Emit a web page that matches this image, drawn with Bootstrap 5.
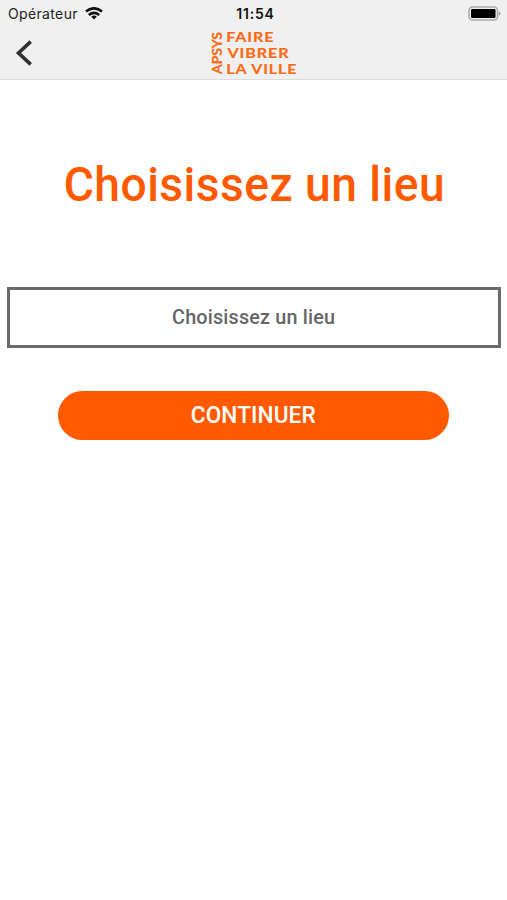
<!DOCTYPE html>
<html lang="fr">
<head>
<meta charset="utf-8">
<meta name="viewport" content="width=device-width, initial-scale=1">
<title>Choisissez un lieu</title>
<link href="https://cdn.jsdelivr.net/npm/bootstrap@5.3.0/dist/css/bootstrap.min.css" rel="stylesheet">
<style>
body { font-family: Roboto, sans-serif; min-height: 900px; overflow: hidden; }
.app-header { background: #f0f0f0; height: 80px; border-bottom: 1px solid #dcdcdc; }
.status-bar { height: 27px; padding: 0 6px 0 8px; font-family: Inter, sans-serif; font-size: 14px; line-height: 27px; color: #222; }
.carrier { letter-spacing: .35px; }
.wifi { margin-left: 7px; }
.clock { font-weight: 600; letter-spacing: .8px; color: #111; padding-left: 2px; }
.nav-row { height: 50px; padding: 1px 8px 0; }
.back-btn { width: 32px; height: 40px; }
/* Slightly condensed lettering */
.narrow { display: inline-block; transform: scaleX(.942); }
.page-title { color: #ff5a00; font-size: 49px; font-weight: 500; line-height: 60px; letter-spacing: .5px; margin: 75px 0 72px; padding-left: 2px; white-space: nowrap; }
.place-wrap { padding: 0 6px 0 7px; }
.place-select { height: 61px; border: 3px solid #6b6b6b; border-radius: 0; color: #666; font-size: 21px; font-weight: 500; letter-spacing: .2px; }
.continue-btn { width: 391px; height: 49px; margin-top: 43px; padding: 0 0 2px; background: #ff5a00; color: #fff; font-size: 24px; font-weight: 500; letter-spacing: .1px; }
.continue-btn:hover { background: #e85200; color: #fff; }
</style>
</head>
<body class="bg-white">
<header class="app-header">
  <div class="status-bar row g-0 align-items-center">
    <div class="col d-flex align-items-center">
      <span class="carrier">Opérateur</span>
      <svg class="wifi" width="18" height="13" viewBox="0 0 18 13" fill="none" stroke="#111" stroke-width="2.6" aria-hidden="true">
        <path d="M1 4.6Q9-2 17 4.6M3.8 7.9Q9 3.7 14.2 7.9"/>
        <path d="M9 12.4 6.2 9.7Q9 7.3 11.8 9.7Z" fill="#111" stroke="none"/>
      </svg>
    </div>
    <div class="col-auto clock">11:54</div>
    <div class="col d-flex justify-content-end">
      <svg width="33" height="15" viewBox="0 0 33 15" aria-hidden="true">
        <rect x="1" y="1" width="28.5" height="13" rx="3.5" fill="#f0f0f0" stroke="#aaa" stroke-width="1.5"/>
        <rect x="3" y="3" width="24.5" height="9" rx="1.2" fill="#000"/>
        <path d="M30.8 5.3Q32.5 6 32.5 7.5T30.8 9.7Z" fill="#999"/>
      </svg>
    </div>
  </div>
  <nav class="nav-row row g-0 align-items-center">
    <div class="col">
      <button class="back-btn btn p-0 border-0 d-flex align-items-center justify-content-center" aria-label="Retour">
        <svg width="18" height="28" viewBox="0 0 18 28" fill="none" stroke="#303030" stroke-width="3.6"><path d="M15.7 2.6 3.5 14 15.7 25.4"/></svg>
      </button>
    </div>
    <div class="col-auto">
      <svg class="d-block" width="90" height="48" viewBox="0 0 90 48" fill="#fa6a14" stroke="#fa6a14" stroke-width=".2" font-family="Lato, sans-serif" font-weight="700" role="img" aria-label="Apsys, faire vibrer la ville">
        <text transform="translate(13.3 45) rotate(-90)" font-size="13.2" textLength="42" lengthAdjust="spacingAndGlyphs">APSYS</text>
        <g font-size="14" letter-spacing=".8">
          <text x="17.3" y="13.4" textLength="48" lengthAdjust="spacingAndGlyphs">FAIRE</text>
          <text x="18.5" y="29.4" textLength="62" lengthAdjust="spacingAndGlyphs">VIBRER</text>
          <text x="17.3" y="45.4" textLength="71" lengthAdjust="spacingAndGlyphs">LA VILLE</text>
        </g>
      </svg>
    </div>
    <div class="col"></div>
  </nav>
</header>
<main class="d-flex flex-column align-items-center">
  <h1 class="page-title text-center"><span class="narrow">Choisissez un lieu</span></h1>
  <div class="place-wrap w-100"><button class="place-select btn d-block w-100 p-0"><span class="narrow">Choisissez un lieu</span></button></div>
  <button class="continue-btn btn rounded-pill border-0"><span class="narrow">CONTINUER</span></button>
</main>
<script src="https://cdn.jsdelivr.net/npm/bootstrap@5.3.0/dist/js/bootstrap.bundle.min.js"></script>
</body>
</html>
